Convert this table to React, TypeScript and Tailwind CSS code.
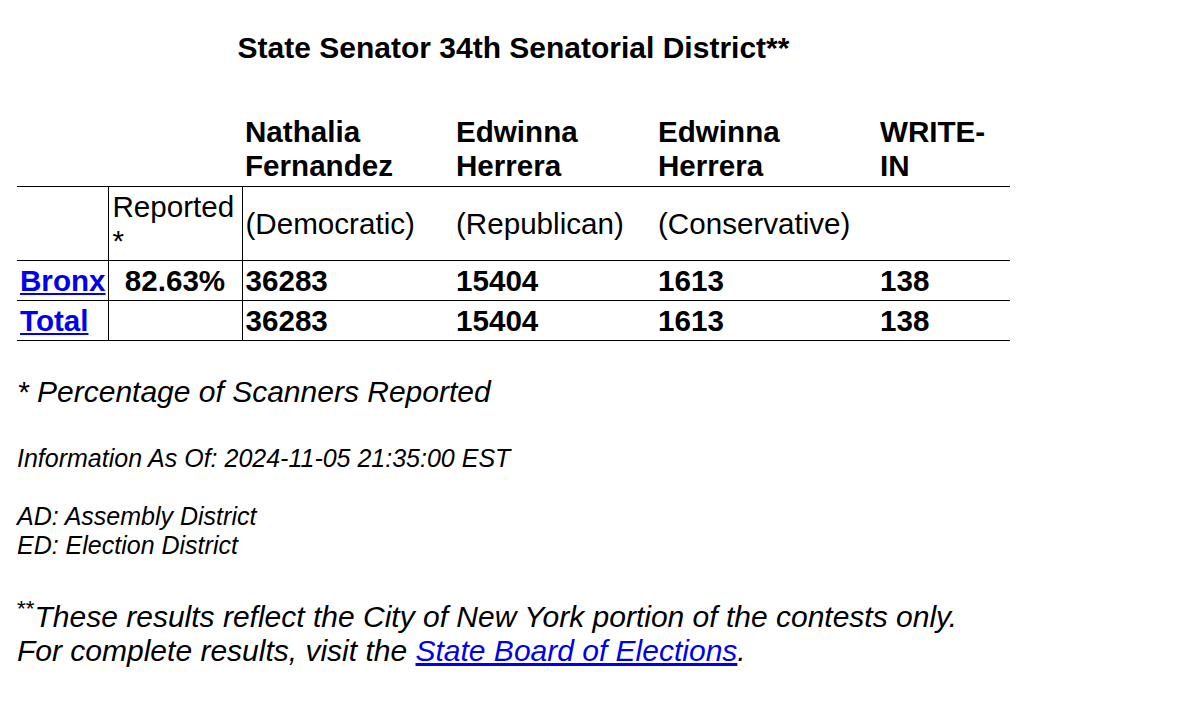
const candidates = [
  { first: 'Nathalia', last: 'Fernandez', party: '(Democratic)', bronx: '36283', total: '36283' },
  { first: 'Edwinna', last: 'Herrera', party: '(Republican)', bronx: '15404', total: '15404' },
  { first: 'Edwinna', last: 'Herrera', party: '(Conservative)', bronx: '1613', total: '1613' },
  { first: 'WRITE-', last: 'IN', party: '', bronx: '138', total: '138' },
]

const colWidths = ['w-[91px]', 'w-[134px]', 'w-[211px]', 'w-[202px]', 'w-[222px]', 'w-[133px]']

export default function App() {
  return (
    <div className="min-h-screen bg-white pl-[17px] pt-[31px] font-['Liberation_Sans',Arial,sans-serif] text-[29.6px] leading-[34px] text-black">
      <div className="w-[993px] text-center text-[30px] font-bold leading-[34.5px]">
        State Senator 34th Senatorial District**
      </div>

      <table className="mt-[46px] w-[993px] table-fixed border-collapse">
        <colgroup>
          {colWidths.map((w, i) => (
            <col key={i} className={w} />
          ))}
        </colgroup>
        <thead>
          <tr className="border-b border-black">
            <th className="p-[3px]" />
            <th className="p-[3px]" />
            {candidates.map((c, i) => (
              <th key={i} className="p-[3px] text-left align-bottom font-bold">
                {c.first}
                <br />
                {c.last}
              </th>
            ))}
          </tr>
        </thead>
        <tbody>
          <tr className="border-b border-black">
            <td className="border-r border-black px-[3px] pt-[3px] pb-[2px]" />
            <td className="border-r border-black px-[3px] pt-[3px] pb-[2px] pl-[4px] align-top font-normal">Reported *</td>
            {candidates.map((c, i) => (
              <td key={i} className="px-[3px] pt-[3px] pb-[2px] align-middle">
                {c.party}
              </td>
            ))}
          </tr>
          <tr className="border-b border-black font-bold">
            <td className="border-r border-black px-[3px] pt-[3px] pb-[2px]">
              <a href="#" className="text-[#0000ee] underline">
                Bronx
              </a>
            </td>
            <td className="border-r border-black px-[3px] pt-[3px] pb-[2px] text-center">82.63%</td>
            {candidates.map((c, i) => (
              <td key={i} className="px-[3px] pt-[3px] pb-[2px]">
                {c.bronx}
              </td>
            ))}
          </tr>
          <tr className="border-b border-black font-bold">
            <td className="border-r border-black px-[3px] pt-[3px] pb-[2px]">
              <a href="#" className="text-[#0000ee] underline">
                Total
              </a>
            </td>
            <td className="border-r border-black px-[3px] pt-[3px] pb-[2px]" />
            {candidates.map((c, i) => (
              <td key={i} className="px-[3px] pt-[3px] pb-[2px]">
                {c.total}
              </td>
            ))}
          </tr>
        </tbody>
      </table>

      <p className="mt-[34px] text-[30px] italic">* Percentage of Scanners Reported</p>

      <p className="mt-[35px] text-[25px] leading-[28.5px] italic">Information As Of: 2024-11-05 21:35:00 EST</p>

      <p className="mt-[30px] text-[25px] leading-[28.5px] italic">
        AD: Assembly District
        <br />
        ED: Election District
      </p>

      <p className="mt-[41px] text-[30px] italic">
        <sup className="not-italic">**</sup>These results reflect the City of New York portion of the contests only.
        <br />
        For complete results, visit the{' '}
        <a href="#" className="text-[#0000ee] underline">
          State Board of Elections
        </a>
        .
      </p>
    </div>
  )
}
